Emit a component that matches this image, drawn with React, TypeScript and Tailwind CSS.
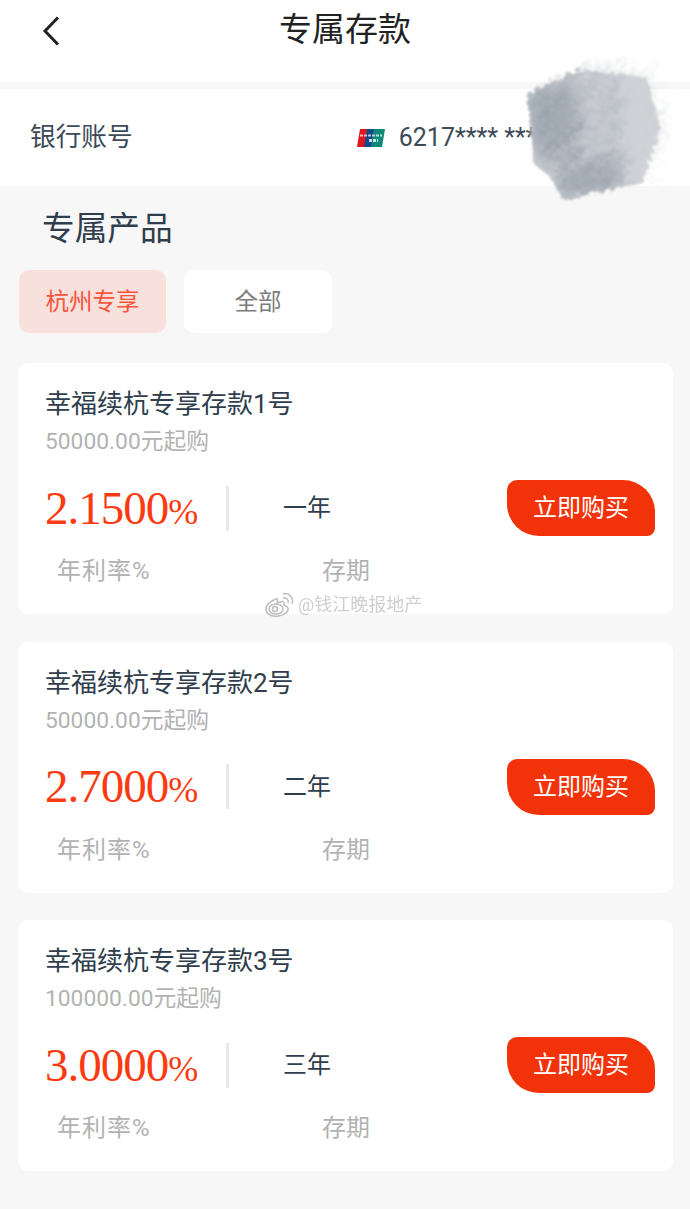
const products = [
  { name: '幸福续杭专享存款1号', min: '50000.00元起购', rate: '2.1500', term: '一年' },
  { name: '幸福续杭专享存款2号', min: '50000.00元起购', rate: '2.7000', term: '二年' },
  { name: '幸福续杭专享存款3号', min: '100000.00元起购', rate: '3.0000', term: '三年' },
];

const sans = 'font-["Roboto","Noto_Sans_CJK_SC",sans-serif]';

const blob = [[17, 37], [70, 14], [137, 21], [150, 71], [133, 127], [53, 144], [40, 121], [23, 107]];

function inBlob(x: number, y: number) {
  let inside = false;
  for (let i = 0, j = blob.length - 1; i < blob.length; j = i++) {
    const [xi, yi] = blob[i];
    const [xj, yj] = blob[j];
    if (yi > y !== yj > y && x < ((xj - xi) * (y - yi)) / (yj - yi) + xi) inside = !inside;
  }
  return inside;
}

// pencil scribble covering the account number
function scribbleStrokes() {
  let seed = 11;
  const rnd = () => {
    seed = (seed * 16807) % 2147483647;
    return seed / 2147483647;
  };
  const out: { d: string; w: number; o: number; c: string }[] = [];
  for (let i = 0; i < 1400; i++) {
    const x = 15 + rnd() * 138;
    const y = 12 + rnd() * 134;
    if (!inBlob(x, y)) continue;
    const len = 10 + rnd() * 18;
    const a = -1.0 + rnd() * 0.5 + (i % 7 === 0 ? 1.2 : 0);
    const dx = Math.cos(a) * len;
    const dy = Math.sin(a) * len;
    out.push({
      d: `M${x.toFixed(1)} ${y.toFixed(1)}l${dx.toFixed(1)} ${dy.toFixed(1)}`,
      w: 0.8 + rnd() * 2,
      o: 0.06 + rnd() * 0.12,
      c: x < 65 || (y > 110 && x < 110) ? '#939ca6' : x > 105 ? '#d9dcdf' : '#b0b7be',
    });
  }
  return out;
}

function Scribble() {
  return (
    <svg className="absolute left-[510px] top-[56px] overflow-visible" width="165" height="158" viewBox="0 0 165 158">
      <defs>
        <filter id="rough" x="-15%" y="-15%" width="130%" height="130%">
          <feTurbulence type="fractalNoise" baseFrequency="0.2" numOctaves="2" seed="4" />
          <feDisplacementMap in="SourceGraphic" scale="9" />
          <feGaussianBlur stdDeviation="1" />
        </filter>
        <filter id="soft" x="-40%" y="-40%" width="180%" height="180%">
          <feGaussianBlur stdDeviation="9" />
        </filter>
        <clipPath id="blobClip">
          <path d="M17 37L70 14L137 21L150 71L133 127L53 144L40 121L23 107Z" />
        </clipPath>
      </defs>
      <g filter="url(#rough)">
        <path d="M17 37L70 14L137 21L150 71L133 127L53 144L40 121L23 107Z" fill="#cdd0d5" />
        <g clipPath="url(#blobClip)">
          <path d="M10 40L62 26L72 84L24 104Z" fill="#a4acb5" opacity="0.9" filter="url(#soft)" />
          <path d="M42 116L108 100L112 135L50 150Z" fill="#abb2ba" opacity="0.9" filter="url(#soft)" />
        </g>
        {scribbleStrokes().map((s, i) => (
          <path key={i} d={s.d} stroke={s.c} strokeWidth={s.w} opacity={s.o} strokeLinecap="round" fill="none" />
        ))}
        <path d="M62 118L108 94" stroke="#a7aeb6" strokeWidth="2" opacity="0.7" />
      </g>
    </svg>
  );
}

function UnionPay() {
  return (
    <svg width="28" height="18" viewBox="0 0 28 18" className="shrink-0">
      <path d="M3 0H12L9 18H0Z" fill="#e2141d" />
      <path d="M10 0H19L16 18H7Z" fill="#0f4a8a" />
      <path d="M17 0H28L25 18H14Z" fill="#0d8a78" />
      <path d="M3 6.5H25" stroke="#fff" strokeWidth="2" opacity="0.7" strokeDasharray="3 1" />
      <path d="M12 11.5H21" stroke="#fff" strokeWidth="3" opacity="0.8" strokeDasharray="3 1" />
    </svg>
  );
}

function WeiboMark() {
  return (
    <svg width="30" height="26" viewBox="0 0 30 26" fill="none" stroke="#bdbdbd" strokeWidth="1.5">
      <path d="M12 7C6 9 1 14 2 18C3 23 9 25 15 24C21 23 25 19 24 16C23 14 21 14 20 13C21 10 19 9 16 10L13 11C14 8 14 6 12 7Z" fill="#fff" />
      <ellipse cx="12" cy="17" rx="7" ry="5" />
      <circle cx="11" cy="17" r="2.5" />
      <path d="M19 6C22 5 25 8 24 11M19 2C25 0 30 6 28 12" />
    </svg>
  );
}

function ProductCard({ name, min, rate, term }: (typeof products)[number]) {
  return (
    <div className="bg-white rounded-[10px] h-[251px] pl-[28px] pr-[18px] pt-[25px]">
      <div className="text-[26px] leading-[32px] text-[#2f3d4c] whitespace-nowrap -ml-px">{name}</div>
      <div className="text-[22.8px] leading-[30px] mt-[7px] text-[#b2b2b2] whitespace-nowrap -ml-px">{min}</div>
      <div className="flex items-center h-[56px] mt-[23px]">
        <div className="w-[153px] whitespace-nowrap font-['Liberation_Serif',serif] text-[#fb3a12] leading-none -ml-px">
          <span className="text-[47px] tracking-[-1px]">{rate}</span>
          <span className="text-[36px]">%</span>
        </div>
        <div className="w-[3px] h-[45px] bg-[#e8e8e8] ml-[28px]" />
        <div className="ml-[54px] text-[24px] text-[#2f3d4c]">{term}</div>
        <button className="ml-auto w-[148px] h-[56px] bg-[#f2330a] text-white text-[24px] rounded-tl-[10px] rounded-tr-[32px] rounded-br-[8px] rounded-bl-[32px]">
          立即购买
        </button>
      </div>
      <div className="flex text-[24px] leading-[32px] text-[#b2b2b2] mt-[19px] pl-[11px]">
        <span className="w-[265px] tracking-[1px]">年利率%</span>
        <span>存期</span>
      </div>
    </div>
  );
}

export default function App() {
  return (
    <div className={`relative w-[690px] h-[1209px] overflow-hidden bg-[#f7f7f7] ${sans}`}>
      <div className="relative bg-white h-[82px] flex justify-center pt-[8px]">
        <svg className="absolute left-[42px] top-[16px]" width="18" height="30" viewBox="0 0 18 30" fill="none" stroke="#222" strokeWidth="3">
          <path d="M16 1.5L3 15L16 28.5" />
        </svg>
        <span className="text-[33px] leading-[44px] text-[#222]">专属存款</span>
      </div>

      <div className="bg-white h-[97px] mt-[7px] flex items-center pl-[30px] pr-[20px]">
        <span className="text-[25.7px] text-[#3d4a58] whitespace-nowrap">银行账号</span>
        <div className="ml-[224px] flex items-center gap-[14px] whitespace-nowrap">
          <UnionPay />
          <span className="text-[25px] text-[#3d4a58]">6217**** ****</span>
        </div>
      </div>

      <div className="text-[32.7px] leading-[44px] text-[#2f3d4c] pl-[42px] mt-[21px]">专属产品</div>

      <div className="flex gap-[18px] pl-[19px] mt-[19px]">
        <div className="w-[147px] h-[63px] rounded-[10px] bg-[#f8e0dd] flex items-center justify-center pt-[3px] text-[23.5px] text-[#f6553a]">
          杭州专享
        </div>
        <div className="w-[148px] h-[63px] rounded-[10px] bg-white flex items-center justify-center pt-[3px] text-[23.5px] text-[#7c7c7c]">
          全部
        </div>
      </div>

      <div className="flex flex-col gap-[27.5px] mt-[30px] ml-[18px] w-[655px]">
        {products.map((p) => (
          <ProductCard key={p.name} {...p} />
        ))}
      </div>

      <Scribble />

      <div className="absolute left-[264px] top-[591px] flex items-center gap-[4px] text-[18px] text-[#cfcfcf] whitespace-nowrap [text-shadow:0_0_3px_#fff]">
        <WeiboMark />
        <span className="blur-[0.5px]">@钱江晚报地产</span>
      </div>
    </div>
  );
}
